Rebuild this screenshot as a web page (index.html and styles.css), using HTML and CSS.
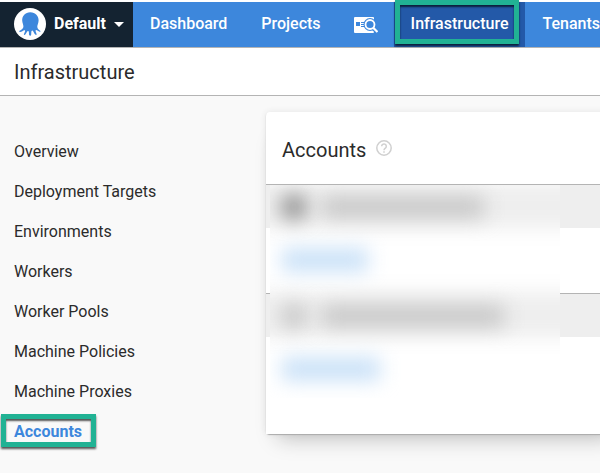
FILE: index.html
```html
<!DOCTYPE html>
<html lang="en">
<head>
<meta charset="utf-8">
<meta name="viewport" content="width=device-width, initial-scale=1">
<title>Infrastructure</title>
<link rel="stylesheet" href="styles.css">
</head>
<body>
<header class="topbar">
  <button class="space" type="button">
    <svg class="logo" viewBox="0 0 32 32" aria-hidden="true">
      <circle cx="16" cy="16" r="16" fill="#fff"/>
      <path fill="#3d87dc" d="M16.300 4.200C11.200 4.200 8 8 8.200 12.500C8.300 15 9.500 16.700 9.400 18.700C9.300 20.500 7.500 21.500 5.600 22.800C4.800 23.400 5.200 24.100 6.200 23.900C7.600 23.700 9.200 22.500 10.400 22.200C11.200 22 11.300 22.700 10.900 23.700L9.900 26.200C9.700 27.100 10.800 27.400 11.500 26.300C12.500 24.700 13.200 22.900 14.100 22.900C15 22.900 14.900 24.600 15 26.200C15.100 28 17 28.200 17.200 26.400C17.400 24.800 17.100 22.700 18.100 22.600C19 22.500 19.600 24.300 20.500 25.800C21.300 27.200 22.900 27.300 22.600 26C22.300 24.600 21 22.700 21.800 22.200C22.600 21.700 23.700 23 25.100 23.600C26.300 24.100 27 23.500 26.100 22.800C24.900 21.800 23.500 20.900 23.300 19.100C23.100 17 24.500 15.300 24.600 12.400C24.700 8 21.500 4.200 16.300 4.200Z"/>
    </svg>
    <span>Default</span>
    <svg class="caret" viewBox="0 0 10 5" aria-hidden="true"><path fill="#fff" d="M0 0h10L5 5z"/></svg>
  </button>
  <nav class="mainnav" aria-label="Main">
    <a href="#">Dashboard</a>
    <a href="#">Projects</a>
    <a class="iconlink" href="#" aria-label="Search projects">
      <svg class="find" viewBox="0 0 24 16" aria-hidden="true">
        <rect width="20" height="16" rx="1" fill="#fff"/>
        <path fill="#3d87dc" d="M2 5h4v4H2zM7 5h4v1H7zM7 7h3v1H7zM7 9h4v1H7z"/>
        <circle cx="16" cy="7.500" r="6.500" fill="#3d87dc"/>
        <path stroke="#3d87dc" stroke-width="4" d="M19 11l4 4"/>
        <circle cx="16" cy="7.500" r="4.500" fill="#3d87dc" stroke="#fff" stroke-width="1.800"/>
        <path stroke="#fff" stroke-width="2.200" d="M19 10.500l4.500 4.500"/>
      </svg>
    </a>
    <a class="current" href="#" aria-current="page">Infrastructure</a>
    <a href="#">Tenants</a>
  </nav>
</header>
<div class="pagetitle"><h1>Infrastructure</h1></div>
<div class="page">
  <nav class="sidenav" aria-label="Infrastructure">
    <a href="#">Overview</a>
    <a href="#">Deployment Targets</a>
    <a href="#">Environments</a>
    <a href="#">Workers</a>
    <a href="#">Worker Pools</a>
    <a href="#">Machine Policies</a>
    <a href="#">Machine Proxies</a>
    <a class="selected" href="#" aria-current="page">Accounts</a>
  </nav>
  <main class="card">
    <div class="cardhead">
      <h2>Accounts</h2>
      <svg class="help" viewBox="0 0 16 16" fill="none" stroke="#d0d0d0" stroke-width="1.500" aria-hidden="true">
        <circle cx="8" cy="8" r="7.200"/>
        <path d="M5.700 6.300a2.300 2.300 0 1 1 3.900 1.600C8.700 8.600 8 9 8 10.200M8 11.300v1.500"/>
      </svg>
    </div>
    <div class="groups">
      <div class="group"></div>
      <div class="entry"></div>
      <div class="group"></div>
      <div class="entry last"></div>
      <div class="redaction">
        <div class="smear">
          <div class="group"></div>
          <div class="entry"></div>
          <div class="group"></div>
        </div>
        <div class="blobs">
          <div class="blobrow"><i class="dot dark"></i><i class="bar first"></i></div>
          <div class="blobrow"><i class="link first"></i></div>
          <div class="blobrow"><i class="dot"></i><i class="bar second"></i></div>
          <div class="blobrow"><i class="link second"></i></div>
        </div>
      </div>
    </div>
  </main>
</div>
</body>
</html>
```
FILE: styles.css
```css
* { box-sizing: border-box; }
body {
  margin: 0;
  padding-top: 2px;
  background: #fff;
  color: #2b2b2b;
  font: 16px/24px Roboto, "Liberation Sans", sans-serif;
  overflow-x: hidden;
}
a { color: inherit; text-decoration: none; }
h1, h2 { margin: 0; font-size: 20px; font-weight: 400; line-height: 24px; }

.topbar {
  display: flex;
  height: 46px;
  background: #3d87dc;
  border-bottom: 1px solid #b4b4b4;
  color: #fff;
  font-weight: 500;
}
.space {
  display: flex;
  flex: none;
  align-items: center;
  gap: 8px;
  padding: 0 9px 1px 14px;
  border: 0;
  background: #142331;
  color: #fff;
  font: inherit;
  font-weight: 700;
}
.logo { width: 32px; height: 32px; }
.caret { width: 10px; height: 5px; }
.mainnav { display: flex; }
.mainnav a { display: flex; flex: none; align-items: center; padding: 0 17px 2px; }
.mainnav .iconlink { padding: 0 16px; }
.find { width: 24px; height: 16px; }
.mainnav .current { position: relative; background: #2359a8; }
.mainnav .current::after,
.selected::after {
  content: "";
  position: absolute;
  border: 5px solid #21b294;
}
.mainnav .current::after {
  inset: -2px 6px 3px 1px;
  box-shadow: 0 2px 2px #0c1f3a, inset 0 2px 2px #0c1f3a;
}

.pagetitle {
  padding: 12px 14px 11px;
  border-bottom: 1px solid #b4b4b4;
}
.page {
  display: flex;
  gap: 16px;
  min-height: calc(100vh - 96px);
  padding-top: 16px;
  background: #f9f9f9;
}
.sidenav {
  display: flex;
  flex: none;
  flex-direction: column;
  align-items: flex-start;
  gap: 16px;
  width: 250px;
  padding: 28px 14px 0;
}
.selected { position: relative; color: #3d87dc; font-weight: 700; }
.selected::after {
  inset: -6px -14px -3px -13px;
  box-shadow: 0 2px 2px #555, inset 0 2px 2px #555;
}

.card {
  flex: 1;
  align-self: flex-start;
  margin-right: -24px;
  border-radius: 4px;
  background: #fff;
  box-shadow: 0 1px 1px #aaa, 0 16px 20px -12px #bbb, 0 0 6px #e4e4e4;
}
.cardhead {
  display: flex;
  align-items: center;
  gap: 10px;
  height: 72px;
  padding: 4px 16px 0;
}
.help { width: 16px; height: 16px; margin-bottom: 4px; }
.groups { position: relative; }
.group { height: 44px; border-top: 1px solid #b4b4b4; background: #eee; }
.entry { height: 65px; background: #fff; }
.last { height: 97px; }

/* Frosted cover that hides account details */
.redaction {
  position: absolute;
  inset: 1px auto 36px 4px;
  width: 290px;
  overflow: hidden;
  background: #fff;
}
.smear { margin: -1px -24px 0; filter: blur(10px); }
.smear .group { border-color: #ddd; }
.blobs { position: absolute; inset: 0; }
.blobrow { display: flex; align-items: center; gap: 16px; height: 44px; padding-left: 12px; }
.blobrow:nth-child(even) { height: 65px; padding-bottom: 4px; }
.blobs i { filter: blur(10px); }
.dot { width: 24px; height: 24px; border-radius: 8px; background: #c4c4c4; }
.dark { background: #888; }
.bar { height: 20px; background: #c4c4c4; }
.bar.first { width: 162px; }
.bar.second { width: 182px; }
.link { height: 22px; background: #c6dff7; }
.link.first { width: 86px; }
.link.second { width: 98px; }
```
